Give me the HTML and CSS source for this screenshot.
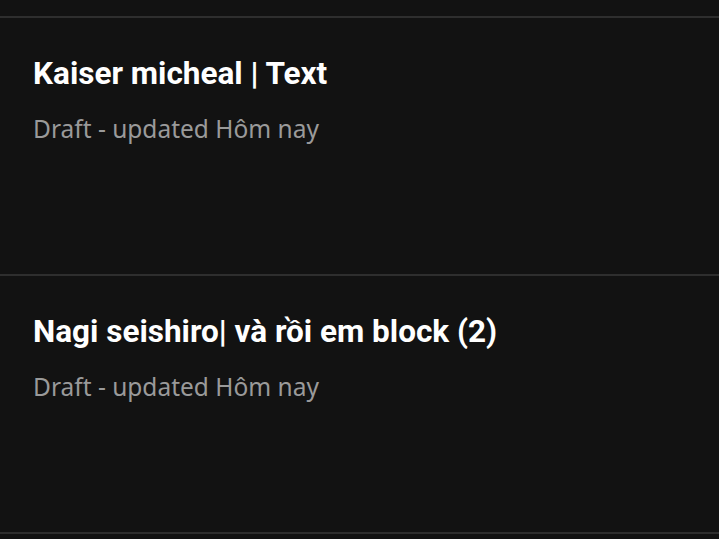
FILE: index.html
```html
<!DOCTYPE html>
<html lang="vi">
<head>
<meta charset="utf-8">
<link rel="stylesheet" href="styles.css">
</head>
<body>
<div class="list">
  <div class="item">
    <div class="title">Kaiser micheal | Text</div>
    <div class="sub">Draft - updated Hôm nay</div>
  </div>
  <div class="item">
    <div class="title">Nagi seishiro| và rồi em block (2)</div>
    <div class="sub">Draft - updated Hôm nay</div>
  </div>
  <div class="end"></div>
</div>
</body>
</html>
```
FILE: styles.css
```css
html, body {
  margin: 0;
  padding: 0;
  background: #121212;
  height: 100%;
  overflow: hidden;
}
.list {
  padding-top: 16px;
}
.item {
  border-top: 2px solid #2e2e2e;
  height: 256px;
  box-sizing: content-box;
  padding-left: 33px;
}
.title {
  font-family: Roboto, "Noto Sans", sans-serif;
  font-weight: 700;
  font-size: 31.5px;
  line-height: 36px;
  color: #ffffff;
  padding-top: 38px;
}
.sub {
  font-family: "Noto Sans", sans-serif;
  font-size: 24.5px;
  line-height: 32px;
  color: #9a9a9a;
  margin-top: 21px;
}
.end {
  border-top: 2px solid #2e2e2e;
}
```
